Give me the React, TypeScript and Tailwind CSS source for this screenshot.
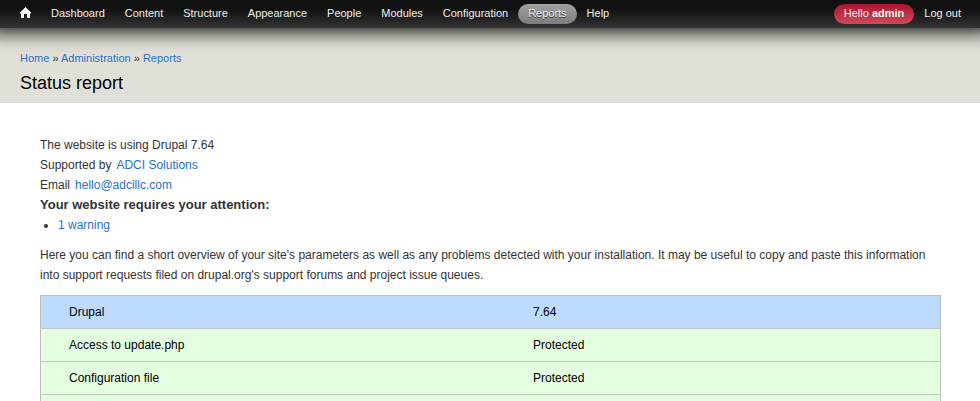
const menu = [
  'Dashboard',
  'Content',
  'Structure',
  'Appearance',
  'People',
  'Modules',
  'Configuration',
  'Reports',
  'Help',
];

const rows = [
  { title: 'Drupal', value: '7.64', info: true },
  { title: 'Access to update.php', value: 'Protected', info: false },
  { title: 'Configuration file', value: 'Protected', info: false },
  { title: '', value: '', info: false },
];

const pill = 'flex h-5 items-center rounded-full px-2.5 pb-0.5';

function HomeIcon() {
  return (
    <svg width="11" height="11" viewBox="0 0 11 11" fill="#fff">
      <path d="M5.5 0 L11 5.5 V6.5 H10 V11 H7 V7 H4 V11 H1 V6.5 H0 V5.5 Z" />
    </svg>
  );
}

function Toolbar() {
  return (
    <nav className="relative z-10 flex h-7 items-start justify-between bg-linear-to-b from-[#101010] from-30% to-[#343434] pt-1 text-[11px] text-[#eee] shadow-[0_-10px_20px_13px_#000]">
      <ul className="flex pl-2.5 text-[10.99px]">
        <li className="flex h-5 w-[31px] items-start pt-[3px] pl-2.5">
          <HomeIcon />
        </li>
        {menu.map((item) => (
          <li
            key={item}
            className={
              item === 'Reports'
                ? `${pill} bg-linear-to-b from-[#a0a0a0] to-[#7d7d7d] [text-shadow:0_1px_0_#333]`
                : pill
            }
          >
            {item}
          </li>
        ))}
      </ul>
      <ul className="flex pr-[9px]">
        <li className={`${pill} bg-linear-to-b from-[#a9122f] to-[#d0485a]`}>
          <span>
            Hello <strong>admin</strong>
          </span>
        </li>
        <li className={pill}>Log out</li>
      </ul>
    </nav>
  );
}

export default function App() {
  return (
    <div className="h-[401px] overflow-hidden bg-white font-['Liberation_Sans',Arial,sans-serif] text-xs leading-5 text-[#333]">
      <Toolbar />
      <header className="h-[75px] bg-[#e0e0d8] px-5 pt-5">
        <div className="text-[11px] text-[#333]">
          <a className="text-[#2a71c5]">Home</a> » <a className="text-[#2a71c5]">Administration</a> »{' '}
          <a className="text-[#2a71c5]">Reports</a>
        </div>
        <h1 className="pt-1 text-lg leading-[22px] text-black">Status report</h1>
      </header>
      <main className="px-10 pt-8">
        <div>The website is using Drupal 7.64</div>
        <div>
          Supported by <a className="ml-[1.7px] text-[#2a71c5]">ADCI Solutions</a>
        </div>
        <div>
          Email <a className="ml-[1.7px] text-[#2a71c5]">hello@adcillc.com</a>
        </div>
        <h3 className="text-[13px] leading-5 font-bold">Your website requires your attention:</h3>
        <ul className="mb-2.5 list-disc pl-[18px]">
          <li>
            <a className="text-[#2a71c5]">1 warning</a>
          </li>
        </ul>
        <p className="mb-2.5">
          Here you can find a short overview of your site's parameters as well as any problems detected with your
          installation. It may be useful to copy and paste this information into support requests filed on
          drupal.org's support forums and project issue queues.
        </p>
        <div className="w-[901px] border border-[#bebfb9] text-black">
          {rows.map((row) => (
            <div
              key={row.title}
              className={`flex h-[33px] items-center border-b border-[#c5c5c5] pl-7 ${row.info ? 'bg-[#bddbff]' : 'bg-[#e3ffe0]'}`}
            >
              <div className="w-[464px]">{row.title}</div>
              <div>{row.value}</div>
            </div>
          ))}
        </div>
      </main>
    </div>
  );
}
